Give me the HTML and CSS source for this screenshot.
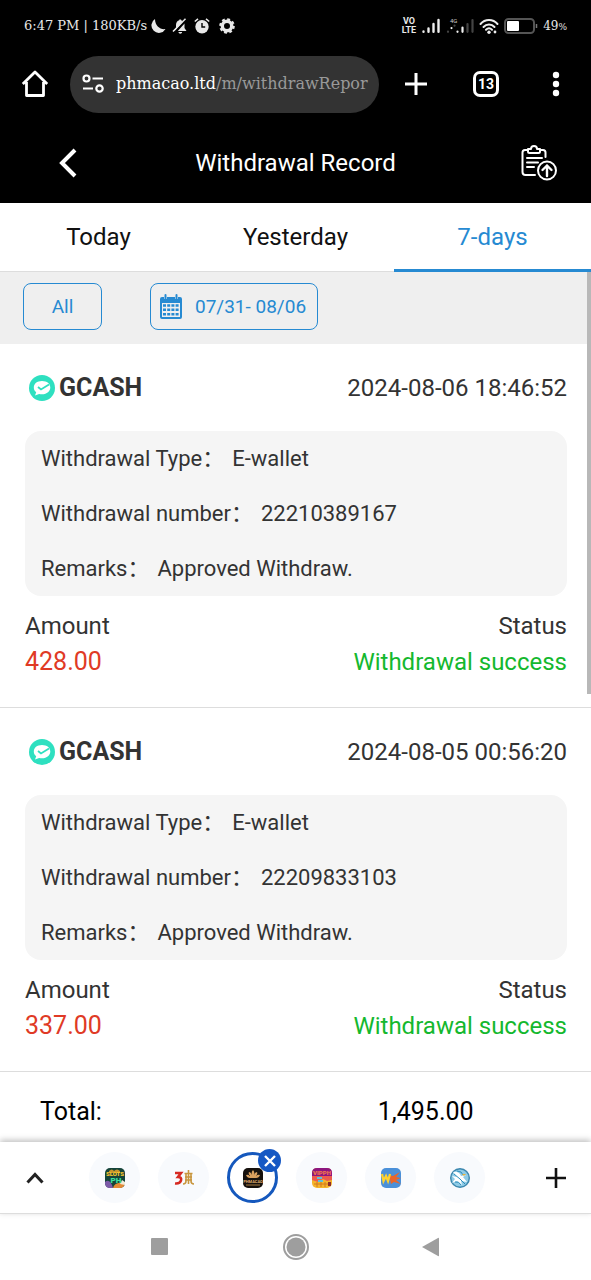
FILE: index.html
```html
<!DOCTYPE html>
<html lang="en">
<head>
    <meta charset="utf-8">
    <meta name="viewport" content="width=device-width, initial-scale=1">
    <title>Withdrawal Record</title>
    <link rel="stylesheet" href="styles.css">
</head>
<body>
    <div class="status">
        <span class="clock">6:47 PM | 180KB/s</span>
        <div class="status-icons">
            <svg width="16" height="16" viewBox="0 0 16 16"><path fill="#e8e8e8" d="M5 1A7.500 7.500 0 1 0 15.500 11C10.500 12 5 8 5 1z"/></svg>
            <svg width="16" height="16" viewBox="0 0 16 16"><path fill="#e8e8e8" d="M4 10V7c0-2.600 1.500-4.200 3.300-4.700V1.500h1.800v.8c.8.200 1.500.6 2 1.200L3.500 12 2 13H1zM12.500 5.500V10l2 3H5.800zM6.500 14h3.600c0 2.300-3.600 2.300-3.600 0z"/><path stroke="#e8e8e8" stroke-width="1.500" d="M1 13.500 13.500.8"/></svg>
            <svg width="16" height="16" viewBox="0 0 16 16"><circle cx="8" cy="8.800" r="6.700" fill="#e8e8e8"/><path d="M.8 3.500 4 .9M15.200 3.500 12 .9" stroke="#e8e8e8" stroke-width="1.600"/><path d="M8 5v4h3.200" stroke="#000" stroke-width="1.400" fill="none"/></svg>
            <svg class="cog" width="16" height="16" viewBox="0 0 16 16"><circle cx="8" cy="8" r="4.700" fill="none" stroke="#e8e8e8" stroke-width="3.400"/><circle cx="8" cy="8" r="6.700" fill="none" stroke="#e8e8e8" stroke-width="2.200" stroke-dasharray="2.860 2.400"/></svg>
        </div>
        <div class="signal">
            <span class="volte">VO<br>LTE</span>
            <svg width="20" height="16" viewBox="0 0 20 16"><path stroke="#eee" stroke-width="2.400" stroke-linecap="round" d="M2.500 13.500v.3M7.500 10.500v3.300M12.500 6v7.800M17.500 2v11.800"/></svg>
            <svg width="28" height="18" viewBox="0 0 28 18"><text x="4" y="6" font-family="Roboto, sans-serif" font-size="6" fill="#ccc">4G</text><path stroke="#eee" stroke-width="2.200" stroke-linecap="round" d="M5.500 11v.1M11.500 14.500v.3M16.500 10.500v4.300"/><path stroke="#444" stroke-width="2.200" stroke-linecap="round" d="M2 14.500v.3M8.500 8.500v.2M21.500 7v7.800M26.500 3v11.800"/></svg>
            <svg width="20" height="17" viewBox="0 0 20 17"><path fill="none" stroke="#eee" stroke-width="2" stroke-linecap="round" d="M1.500 6C6 .8 14 .8 18.500 6M4.500 9c3-3.400 8-3.400 11 0M7 11.800c2-2 4-2 6 0"/><circle cx="10" cy="14.300" r="1.700" fill="#eee"/><circle cx="16" cy="14" r="1.400" fill="#eee"/></svg>
            <svg width="34" height="16" viewBox="0 0 34 16"><rect x="1" y="1" width="29" height="14" rx="3.500" fill="none" stroke="#555" stroke-width="2"/><rect x="3" y="3" width="12" height="10" rx="1" fill="#fff"/><path stroke="#777" stroke-width="1.500" d="M32.500 6v4"/></svg>
            <span class="battery">49<small>%</small></span>
        </div>
    </div>

    <div class="toolbar">
        <button class="tool" aria-label="Home">
            <svg width="28" height="28" viewBox="0 0 28 28"><path fill="none" stroke="#fff" stroke-width="2.800" stroke-linejoin="round" d="M1.800 14 14 2l12.200 12M5.500 12v13.500h17V12"/></svg>
        </button>
        <button class="address" aria-label="Address">
            <svg width="22" height="20" viewBox="0 0 22 20"><g fill="none" stroke="#fff" stroke-width="2.200"><circle cx="4.500" cy="4.500" r="3"/><path d="M10.500 4.500H21M1 14.500h10"/><circle cx="17.500" cy="14.500" r="3.200"/></g></svg>
            <span class="url"><b>phmacao.ltd</b>/m/withdrawRepor</span>
        </button>
        <button class="tool" aria-label="New tab">
            <svg width="24" height="24" viewBox="0 0 24 24"><path stroke="#fff" stroke-width="3" d="M12 1v22M1 12h22"/></svg>
        </button>
        <button class="tool" aria-label="Open tabs"><span class="count">13</span></button>
        <button class="tool" aria-label="Menu">
            <svg width="8" height="26" viewBox="0 0 8 26"><g fill="#fff"><circle cx="4" cy="4" r="3.200"/><circle cx="4" cy="13" r="3.200"/><circle cx="4" cy="22" r="3.200"/></g></svg>
        </button>
    </div>

    <header class="header">
        <button class="icon-btn" aria-label="Back">
            <svg width="20" height="30" viewBox="0 0 20 30"><path fill="none" stroke="#fff" stroke-width="4" d="M17 2 4 15l13 13"/></svg>
        </button>
        <h1>Withdrawal Record</h1>
        <button class="icon-btn reports" aria-label="Reports">
            <svg width="36" height="36" viewBox="0 0 36 36"><g fill="none" stroke="#fff" stroke-width="2" stroke-linecap="round" stroke-linejoin="round"><path d="M7 5H4Q1.500 5 1.500 7.500V27Q1.500 30 4.500 30H14M19 5h3q2.500 0 2.500 2.500V12M7 4h3c0-4 6-4 6 0h3v2.500q0 1.500-1.500 1.500h-9Q7 8 7 6.500zM6 13h15M6 17.500h11M6 22h7"/><circle cx="26" cy="25.500" r="9"/><path d="M26 31v-10.500M21.500 25l4.500-4.500 4.500 4.500" stroke-width="2.400"/></g></svg>
        </button>
    </header>

    <nav class="tabs">
        <button>Today</button>
        <button>Yesterday</button>
        <button class="on">7-days</button>
    </nav>

    <main class="content">
        <div class="filters">
            <button class="filter all">All</button>
            <button class="filter date">
                <svg width="22" height="26" viewBox="0 0 22 26"><path fill="#268ad2" d="M2 3h2v2h3V3h8v2h3V3h2q2 0 2 2v18q0 2-2 2H2q-2 0-2-2V5q0-2 2-2z"/><path stroke="#268ad2" stroke-width="2" stroke-linecap="round" d="M5.500 1v4M16.500 1v4"/><path fill="#efefef" d="M2 9h18v14H2z"/><path stroke="#268ad2" stroke-width="2.500" stroke-dasharray="3 1.200" d="M3 11.500h16M3 15.800h16M3 20.200h16"/></svg>
                <span>07/31- 08/06</span>
            </button>
        </div>

        <section class="record">
            <div class="line top">
                <h2><svg width="26" height="26" viewBox="0 0 26 26"><circle cx="13" cy="13" r="13" fill="#2ee0c0"/><path fill="#fff" d="M13 6c5 0 8.300 2.800 8.300 6.500S18 19.300 13 19.300c-1 0-2-.1-2.900-.4L6 20.500l1.200-3.200C5.700 16.200 4.800 14.500 4.800 12.500 4.800 8.800 8 6 13 6z"/><path fill="none" stroke="#2ee0c0" stroke-width="1.800" d="m9 12 3 2.500 8-5"/></svg>GCASH</h2>
                <time>2024-08-06 18:46:52</time>
            </div>
            <dl class="info">
                <div><dt>Withdrawal Type：</dt><dd>E-wallet</dd></div>
                <div><dt>Withdrawal number：</dt><dd>22210389167</dd></div>
                <div><dt>Remarks：</dt><dd>Approved Withdraw.</dd></div>
            </dl>
            <div class="line"><span>Amount</span><span>Status</span></div>
            <div class="line"><span class="red">428.00</span><span class="green">Withdrawal success</span></div>
        </section>

        <section class="record">
            <div class="line top">
                <h2><svg width="26" height="26" viewBox="0 0 26 26"><circle cx="13" cy="13" r="13" fill="#2ee0c0"/><path fill="#fff" d="M13 6c5 0 8.300 2.800 8.300 6.500S18 19.300 13 19.300c-1 0-2-.1-2.900-.4L6 20.500l1.200-3.200C5.700 16.200 4.800 14.500 4.800 12.500 4.800 8.800 8 6 13 6z"/><path fill="none" stroke="#2ee0c0" stroke-width="1.800" d="m9 12 3 2.500 8-5"/></svg>GCASH</h2>
                <time>2024-08-05 00:56:20</time>
            </div>
            <dl class="info">
                <div><dt>Withdrawal Type：</dt><dd>E-wallet</dd></div>
                <div><dt>Withdrawal number：</dt><dd>22209833103</dd></div>
                <div><dt>Remarks：</dt><dd>Approved Withdraw.</dd></div>
            </dl>
            <div class="line"><span>Amount</span><span>Status</span></div>
            <div class="line"><span class="red">337.00</span><span class="green">Withdrawal success</span></div>
        </section>

        <div class="total"><span>Total:</span><span class="sum">1,495.00</span></div>
        <i class="scrollbar"></i>
    </main>

    <div class="strip">
        <button class="tool" aria-label="Show group">
            <svg width="18" height="12" viewBox="0 0 18 12"><path fill="none" stroke="#222" stroke-width="3" d="m1.500 10.500 7.500-8 7.500 8"/></svg>
        </button>
        <div class="sites">
            <button aria-label="Slots PH">
                <svg width="22" height="22" viewBox="0 0 22 22"><rect x="1" y="1" width="20" height="20" rx="5" fill="#15443a"/><path fill="#7d5ba8" d="M1 15q5-4 8 6H6q-5 0-5-5z"/><path fill="#e38a35" d="M9 21q1-6 12-5-1 5-5 5z"/><path fill="#f4ead6" d="m16 17 2-4 3 2v3z"/><path fill="#c9962c" d="M5 4q3-3 5 0 3-3 6 0v2H5z"/><text x="11" y="9" text-anchor="middle" font-family="Roboto, sans-serif" font-weight="900" font-size="6" fill="#f7c62f">SLOTS</text><text x="12" y="16" text-anchor="middle" font-family="Roboto, sans-serif" font-weight="900" font-size="8" fill="#3fe0a0">PH</text></svg>
            </button>
            <button aria-label="3 Jili">
                <svg width="22" height="22" viewBox="0 0 22 22"><path fill="none" stroke="#d62a22" stroke-width="2.600" d="M2 6h6L5 10q4 0 3 3.500-1 3.500-6 3"/><path fill="none" stroke="#c8963e" stroke-width="1.600" d="M15.500 3v3M11.500 6.500h8M13 7v7q0 3-3 3M18 7v7q0 3 3 3M12 10h7M12 13h7M15.500 7v10"/></svg>
            </button>
            <button class="current" aria-label="PH Macao">
                <svg width="22" height="22" viewBox="0 0 22 22"><rect x="1" y="1" width="20" height="20" rx="5" fill="#16110d"/><path fill="#d9a05e" d="M11 3q2 2 1 5Q13 5 15 5q1 2-1 4 2-2 4-1-1 3-4 3H8Q5 11 4 8q2-1 4 1-2-2-1-4 2 0 3 3-1-3 1-5z"/><text x="11" y="16" text-anchor="middle" font-family="Roboto, sans-serif" font-weight="700" font-size="4" fill="#e0b070">PHMACAO</text><path stroke="#a87c42" d="M4 18h14"/></svg>
                <span class="close"><svg width="12" height="12" viewBox="0 0 12 12"><path stroke="#fff" stroke-width="2.400" d="m1 1 10 10M11 1 1 11"/></svg></span>
            </button>
            <button aria-label="VIP PH">
                <svg width="22" height="22" viewBox="0 0 22 22"><rect x="1" y="1" width="20" height="20" rx="5" fill="#f5b52c"/><path fill="#8d167f" d="M1 10V6q0-5 5-5h10q5 0 5 5v4z"/><path fill="#ec5b4d" d="M1 9h20v4l-5 1-4-2-5 3-6-2z"/><text x="11" y="8" text-anchor="middle" font-family="Roboto, sans-serif" font-weight="900" font-size="6" fill="#f27a4b">VIPPH</text><path stroke="#5cc2dc" stroke-width="2" d="M6 11h5M7 14h5"/><path stroke="#d3781d" d="M3 17h16M6 15v5M10 15v5M14 15v5"/><path fill="#8c2b2b" d="M17 15h3v4h-3z"/></svg>
            </button>
            <button aria-label="WK">
                <svg width="22" height="22" viewBox="0 0 22 22"><rect x="1" y="1" width="20" height="20" rx="5" fill="#4a90d9"/><path fill="#e9652a" d="m9 8 4 1 7-4-4 5 5 1-5 2 5 4-7-2-3 2z"/><path fill="none" stroke="#ffd22e" stroke-width="2.300" d="m2 7 1.500 7L6 9l2 5 2-7"/></svg>
            </button>
            <button aria-label="Bird">
                <svg width="22" height="22" viewBox="0 0 22 22"><circle cx="11" cy="11" r="9.300" fill="#8fcbe6" stroke="#3c87ae" stroke-width="1.400"/><path fill="#fff" d="M4 5q6-1 8 4l5-1-3 2 4 5-6-1 1 4-5-4-5 2 3-4-3-3 5 1z"/><path fill="none" stroke="#2f8dbb" d="m5 7 6 5 5 5M6 15q4-1 6 3M8 4q5 0 6 4"/><path fill="#e7b13b" d="m13 7 4 0-2 2z"/></svg>
            </button>
        </div>
        <button class="tool" aria-label="Add">
            <svg width="20" height="20" viewBox="0 0 20 20"><path stroke="#111" stroke-width="2.600" d="M10 0v20M0 10h20"/></svg>
        </button>
    </div>

    <div class="navbar">
        <button aria-label="Recents"><svg width="18" height="18" viewBox="0 0 18 18"><rect width="17" height="17" rx="1" fill="#9e9e9e"/></svg></button>
        <button aria-label="Home screen"><svg width="26" height="26" viewBox="0 0 26 26"><circle cx="13" cy="13" r="12" fill="none" stroke="#9e9e9e" stroke-width="2"/><circle cx="13" cy="13" r="9.500" fill="#9e9e9e"/></svg></button>
        <button aria-label="Back"><svg width="20" height="20" viewBox="0 0 20 20"><path fill="#9e9e9e" d="M0 10 16 1q1-.5 1 .5v17q0 1-1 .5z"/></svg></button>
    </div>
</body>
</html>
```
FILE: styles.css
```css
*{margin:0;padding:0;box-sizing:border-box;}
body{display:flex;flex-direction:column;height:100vh;background:#fff;color:#333;font-family:Roboto,"Noto Sans CJK SC",sans-serif;font-size:24px;line-height:36px;}
button{display:flex;align-items:center;justify-content:center;border:0;background:none;color:inherit;font:inherit;}
svg{display:block;flex:none;}

/* phone status bar */
.status{display:flex;align-items:center;height:52px;padding:0 24px;background:#000;color:#e8e8e8;font-family:"DejaVu Serif",serif;font-size:13px;line-height:16px;}
.clock{white-space:nowrap;}
.status-icons{display:flex;gap:6px;margin-left:3px;}
.cog{margin-left:3px;}
.signal{display:flex;align-items:center;gap:5px;margin-left:auto;}
.volte{font:700 9px/9px Roboto,sans-serif;text-align:center;}
.battery{font-size:12px;}
.battery small{font-size:9px;}

/* browser toolbar */
.toolbar{display:flex;align-items:center;height:64px;background:#000;color:#fff;}
.tool{flex:none;width:70px;height:100%;}
.address{flex:1;min-width:0;gap:12px;height:57px;margin-right:2px;padding:0 8px 0 12px;border-radius:29px;background:#333;}
.url{flex:1;overflow:hidden;color:#999;font-family:"DejaVu Serif",serif;font-size:16px;line-height:24px;text-align:left;white-space:nowrap;}
.url b{color:#fff;font-weight:400;}
.count{width:26px;height:26px;border:3px solid #fff;border-radius:7px;font-size:14px;font-weight:700;line-height:20px;}

/* page header */
.header{display:flex;align-items:center;justify-content:space-between;height:87px;padding:6px 34px 0;background:#000;color:#fff;}
.header h1{font-size:24px;font-weight:400;}
.icon-btn{width:68px;height:48px;}
.reports{justify-content:flex-end;}

.tabs{display:grid;grid-template-columns:repeat(3,1fr);height:69px;border-bottom:1px solid #ddd;color:#111;}
.tabs button{height:69px;padding-top:2px;border-bottom:3px solid transparent;}
.tabs .on{border-color:#268ad2;color:#268ad2;}

.content{position:relative;flex:1;min-height:0;overflow:hidden;}
.filters{display:flex;gap:48px;height:72px;padding:11px 23px;background:#efefef;}
.filter{height:47px;border:1px solid #268ad2;border-radius:8px;color:#268ad2;font-size:19px;}
.all{width:79px;}
.date{gap:13px;padding:0 11px 0 9px;}

/* records */
.record{padding:26px 24px 27px 25px;border-bottom:1px solid #ddd;}
.line{display:flex;justify-content:space-between;}
.top{margin-bottom:25px;}
.top h2{display:flex;align-items:center;gap:4px;padding-left:4px;font-size:25px;font-weight:700;}
.info{margin-bottom:12px;padding:0 16px;border-radius:16px;background:#f5f5f5;font-size:22px;line-height:55px;}
.info div{display:flex;gap:8px;height:55px;}
.red{color:#e03a25;font-size:25px;}
.green{color:#14b82e;}

.total{display:grid;grid-template-columns:44% 1fr;padding:22px 0 22px 40px;color:#000;font-size:25px;}
.sum{padding-right:22px;text-align:center;}
.scrollbar{position:absolute;top:0;right:0;width:4px;height:422px;background:#b8b8b8;}

/* open tab group */
.strip{position:relative;display:flex;height:72px;border-bottom:1px solid #ddd;background:#fff;box-shadow:0 -2px 6px rgba(0,0,0,.25);}
.sites{display:flex;flex:1;gap:18px;align-items:center;padding-left:19px;}
.sites button{position:relative;width:51px;height:51px;border-radius:50%;background:#f8fafd;}
.sites .current{border:3px solid #1558bd;background:#fff;}
.close{position:absolute;top:-6px;right:-6px;display:flex;align-items:center;justify-content:center;width:23px;height:23px;border-radius:50%;background:#1558c4;}

.navbar{display:flex;justify-content:center;height:66px;}
.navbar button{width:136px;}
```
